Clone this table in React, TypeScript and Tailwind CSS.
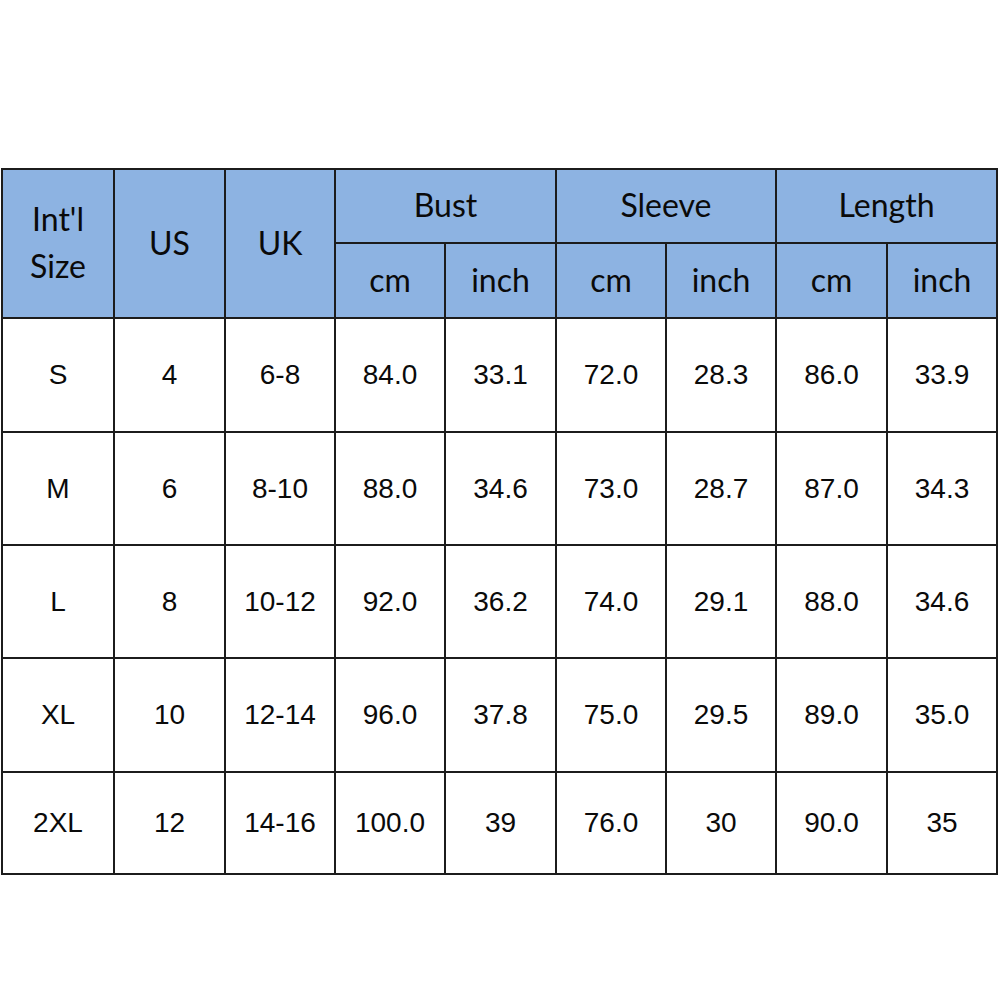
import React from "react";

const rows = [
  ["S", "4", "6-8", "84.0", "33.1", "72.0", "28.3", "86.0", "33.9"],
  ["M", "6", "8-10", "88.0", "34.6", "73.0", "28.7", "87.0", "34.3"],
  ["L", "8", "10-12", "92.0", "36.2", "74.0", "29.1", "88.0", "34.6"],
  ["XL", "10", "12-14", "96.0", "37.8", "75.0", "29.5", "89.0", "35.0"],
  ["2XL", "12", "14-16", "100.0", "39", "76.0", "30", "90.0", "35"],
];

const hdr = "bg-[#8db3e2] flex items-center justify-center text-[#0a0a0a] text-[32px] leading-[47px] text-center pb-[3px]";
const cell = "bg-white flex items-center justify-center text-[#0a0a0a] text-[28px]";

export default function App() {
  return (
    <div className="w-[1000px] h-[1000px] bg-white">
      <div className="pt-[168px] pl-[1px]">
        <div
          className="grid w-[997px] p-[2px] gap-[2px] bg-[#1c1c1c] grid-cols-[110px_109px_108px_108px_109px_108px_108px_109px_108px] grid-rows-[72px_73px_112px_111px_111px_112px_100px]"
          style={{ fontFamily: "Lato, 'Open Sans', sans-serif" }}
        >
          <div className={`${hdr} row-span-2`}>
            <span>Int'l<br />Size</span>
          </div>
          <div className={`${hdr} row-span-2`}>US</div>
          <div className={`${hdr} row-span-2`}>UK</div>
          <div className={`${hdr} col-span-2`}>Bust</div>
          <div className={`${hdr} col-span-2`}>Sleeve</div>
          <div className={`${hdr} col-span-2`}>Length</div>
          {["cm", "inch", "cm", "inch", "cm", "inch"].map((t, i) => (
            <div key={i} className={hdr}>{t}</div>
          ))}
          {rows.flatMap((r, ri) =>
            r.map((v, ci) => (
              <div
                key={`${ri}-${ci}`}
                className={cell}
                style={{ fontFamily: "'Liberation Sans', Arial, sans-serif" }}
              >
                {v}
              </div>
            ))
          )}
        </div>
      </div>
    </div>
  );
}
